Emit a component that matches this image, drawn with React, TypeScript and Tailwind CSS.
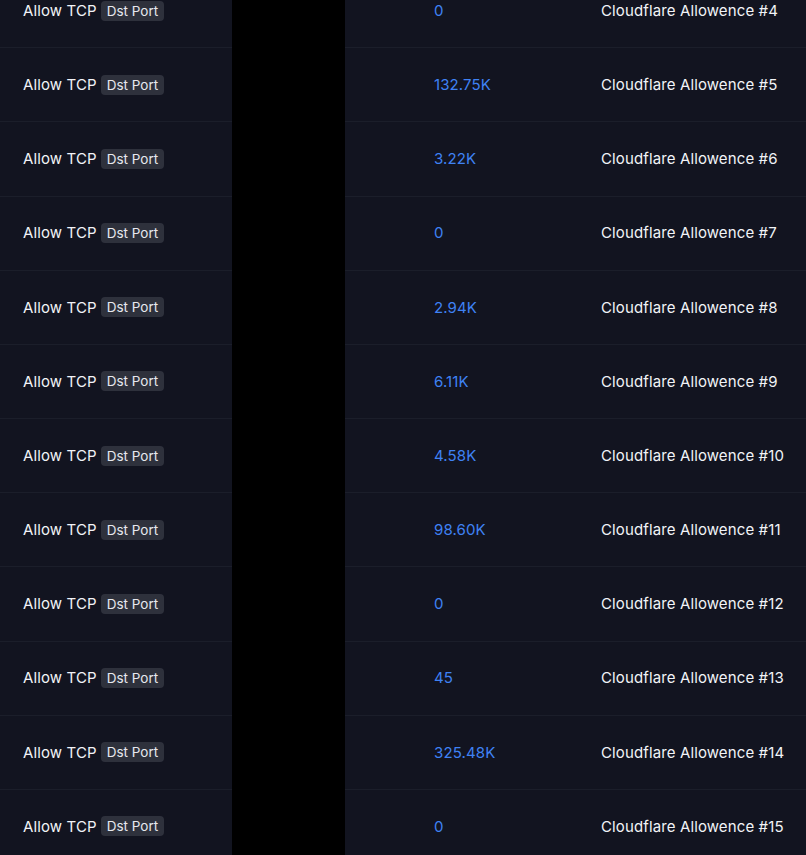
const rows = [
  { n: 4, value: '0' },
  { n: 5, value: '132.75K' },
  { n: 6, value: '3.22K' },
  { n: 7, value: '0' },
  { n: 8, value: '2.94K' },
  { n: 9, value: '6.11K' },
  { n: 10, value: '4.58K' },
  { n: 11, value: '98.60K' },
  { n: 12, value: '0' },
  { n: 13, value: '45' },
  { n: 14, value: '325.48K' },
  { n: 15, value: '0' },
]

export default function App() {
  return (
    <div
      className="h-[855px] w-full overflow-hidden bg-[#121420] text-[15px] tracking-[0.12px] text-[#f1f3f7]"
      style={{ fontFamily: 'Inter, "Noto Sans", sans-serif' }}
    >
      <div className="-mt-[26px]">
        {rows.map((row) => (
          <div key={row.n} className="grid h-[74.18px] grid-cols-[232px_113px_256px_1fr]">
            <div className="flex items-center gap-[4px] border-b border-[#1b1e2a] pl-[23px]">
              <span className="pt-[1px]">Allow TCP</span>
              <span className="rounded-[4px] bg-[#2e313c] px-[6px] text-[13.5px] leading-[20px] tracking-normal text-[#e6e8ee]">
                Dst Port
              </span>
            </div>
            <div className="bg-black" />
            <div className="flex items-center border-b border-[#1b1e2a] pl-[89px] pt-[1px] text-[#3f82f4]">
              {row.value}
            </div>
            <div className="flex items-center border-b border-[#1b1e2a] pt-[1px]">
              Cloudflare Allowence #{row.n}
            </div>
          </div>
        ))}
      </div>
    </div>
  )
}
